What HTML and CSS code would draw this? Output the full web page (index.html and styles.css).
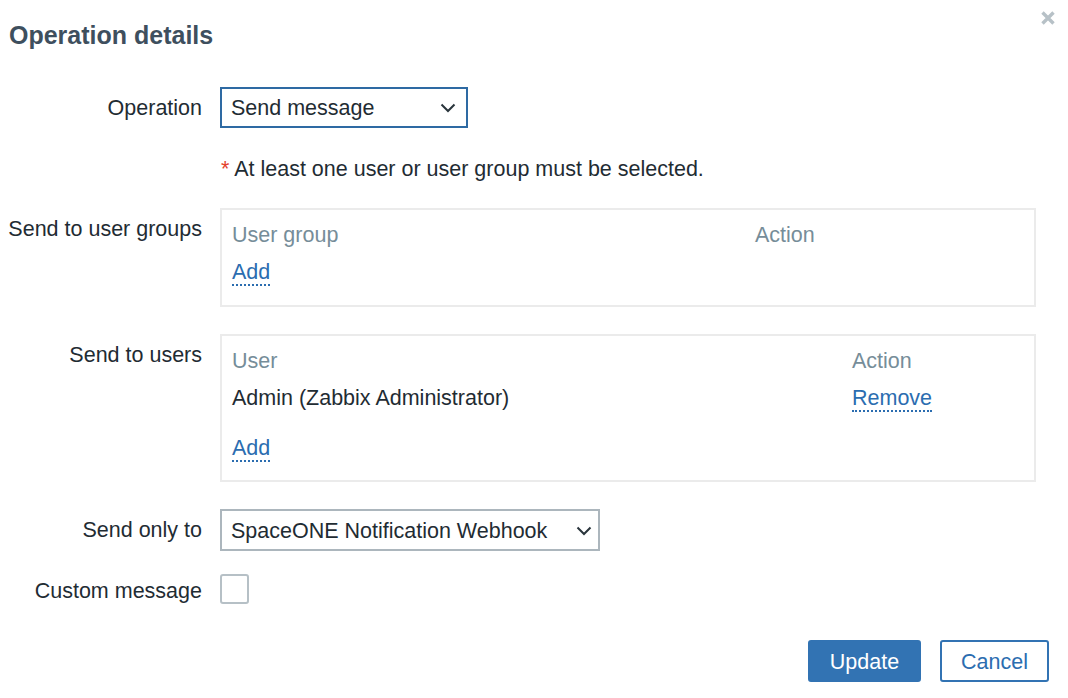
FILE: index.html
```html
<!DOCTYPE html>
<html>
<head>
<meta charset="utf-8">
<link rel="stylesheet" href="styles.css">
</head>
<body>
<div class="dialog">
  <div class="header">
    <h1 class="title">Operation details</h1>
    <button class="close" aria-label="Close">
      <svg width="16" height="16" viewBox="0 0 16 16"><path d="M2.5 2.5 L13.5 13.5 M13.5 2.5 L2.5 13.5" stroke="#b7c1c7" stroke-width="3.4" stroke-linecap="butt"/></svg>
    </button>
  </div>
  <div class="form">
    <div class="row row-op">
      <label class="lbl lbl-mid">Operation</label>
      <div class="field">
        <div class="select select-focus">
          <span class="sel-text">Send message</span>
          <svg class="chev" width="16" height="10" viewBox="0 0 16 10"><path d="M1.5 1.5 L8 8 L14.5 1.5" fill="none" stroke="#2a353c" stroke-width="2"/></svg>
        </div>
      </div>
    </div>
    <div class="row row-warn">
      <div class="lbl"></div>
      <div class="field warn"><span class="req">*</span> At least one user or user group must be selected.</div>
    </div>
    <div class="row row-groups">
      <label class="lbl lbl-top">Send to user groups</label>
      <div class="field">
        <div class="box">
          <div class="trow thead"><span class="c1 c1-groups">User group</span><span>Action</span></div>
          <div class="trow tadd"><a class="link">Add</a></div>
        </div>
      </div>
    </div>
    <div class="row row-users">
      <label class="lbl lbl-top">Send to users</label>
      <div class="field">
        <div class="box">
          <div class="trow thead"><span class="c1 c1-users">User</span><span>Action</span></div>
          <div class="trow tdata"><span class="c1 c1-users">Admin (Zabbix Administrator)</span><a class="link">Remove</a></div>
          <div class="trow tadd2"><a class="link">Add</a></div>
        </div>
      </div>
    </div>
    <div class="row row-only">
      <label class="lbl lbl-mid2">Send only to</label>
      <div class="field">
        <div class="select select-gray">
          <span class="sel-text">SpaceONE Notification Webhook</span>
          <svg class="chev" width="16" height="10" viewBox="0 0 16 10"><path d="M1.5 1.5 L8 8 L14.5 1.5" fill="none" stroke="#2a353c" stroke-width="2"/></svg>
        </div>
      </div>
    </div>
    <div class="row row-custom">
      <label class="lbl lbl-cb">Custom message</label>
      <div class="field"><span class="checkbox"></span></div>
    </div>
  </div>
  <div class="footer">
    <button class="btn btn-primary">Update</button>
    <button class="btn btn-alt">Cancel</button>
  </div>
</div>
</body>
</html>
```

FILE: styles.css
```css
* { box-sizing: border-box; }
html, body { margin: 0; padding: 0; background: #ffffff; }
body {
  font-family: "Liberation Sans", Arial, sans-serif;
  font-size: 21.5px;
  color: #1f2c33;
  width: 1068px;
  height: 698px;
  overflow: hidden;
}
.dialog { position: relative; width: 1068px; }
.header { padding-top: 20px; padding-left: 9px; height: 50px; }
.title {
  margin: 0;
  font-size: 25px;
  line-height: 30px;
  font-weight: bold;
  color: #3e4f5e;
}
.close {
  position: absolute;
  top: 10px;
  right: 12px;
  width: 16px;
  height: 16px;
  padding: 0;
  border: 0;
  background: none;
}
.close svg { display: block; }
.form { display: flex; flex-direction: column; }
.row { display: grid; grid-template-columns: 202px 816px; column-gap: 18px; }
.lbl { text-align: right; line-height: 24px; white-space: nowrap; }
.lbl-mid { line-height: 42px; }
.lbl-top { padding-top: 9px; }
.lbl-mid2 { line-height: 42px; }
.lbl-cb { line-height: 30px; margin-top: 2px; }
.row-op { margin-top: 37px; height: 41px; }
.row-warn { margin-top: 29px; }
.row-groups { margin-top: 27px; }
.row-users { margin-top: 27px; }
.row-only { margin-top: 27px; }
.row-custom { margin-top: 23px; }
.select {
  display: flex;
  align-items: center;
  justify-content: space-between;
  height: 41px;
  padding: 0 10px 0 9px;
  border: 2px solid #2e6aa3;
  background: #fff;
}
.sel-text { padding-top: 2px; }
.select-focus { width: 248px; }
.select-gray { width: 380px; height: 42px; border-color: #acb6bd; padding-right: 6px; }
.chev { display: block; margin-top: 1px; }
.warn { line-height: 24px; padding-left: 1px; }
.req { color: #e4412c; }
.box {
  border: 2px solid #ebebeb;
  padding: 13px 10px 0 10px;
}
.trow { display: flex; line-height: 24px; }
.thead { color: #768d99; }
.c1-groups { width: 523px; }
.c1-users { width: 620px; }
.tadd { margin-top: 13px; height: 45px; }
.tdata { margin-top: 13px; }
.tadd2 { margin-top: 24px; height: 44px; }
.link {
  color: #2b6db0;
  border-bottom: 2px dotted #2b6db0;
  height: 26px;
  line-height: 24px;
  display: inline-block;
}
.checkbox {
  display: block;
  width: 29px;
  height: 30px;
  border: 2px solid #b6c0c6;
  border-radius: 3px;
  background: #fff;
}
.footer {
  display: flex;
  justify-content: flex-end;
  gap: 19px;
  margin-top: 34px;
  padding-right: 19px;
}
.btn {
  height: 42px;
  font-family: "Liberation Sans", Arial, sans-serif;
  font-size: 21.5px;
  border-radius: 3px;
  padding: 2px 0 0 0;
  cursor: pointer;
}
.btn-primary {
  width: 113px;
  background: #3273b3;
  border: 2px solid #3273b3;
  color: #ffffff;
}
.btn-alt {
  width: 109px;
  background: #ffffff;
  border: 2px solid #3273b3;
  color: #2b6db0;
}
```
